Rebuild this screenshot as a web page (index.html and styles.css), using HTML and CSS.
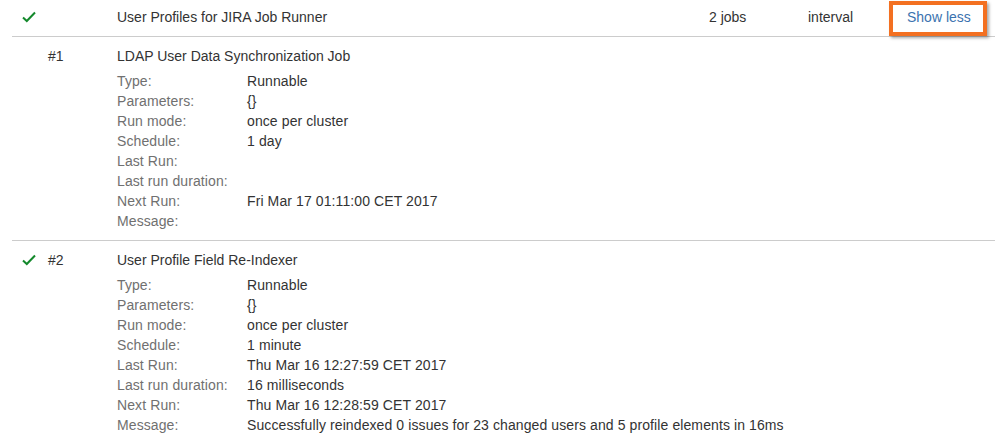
FILE: index.html
```html
<!DOCTYPE html>
<html lang="en">
<head>
    <meta charset="UTF-8">
    <title>Scheduler details</title>
    <link rel="stylesheet" href="styles.css">
</head>
<body>

    <div class="scheduler">
        <!-- Runner row -->
        <div class="runner-row">
            <div class="status">
                <svg class="check" width="14" height="12" viewBox="0 0 14 12"><path d="M1 6.5 L4.8 10 L13 1.5" fill="none" stroke="#14892c" stroke-width="2"/></svg>
            </div>
            <div class="num"></div>
            <div class="runner-name">User Profiles for JIRA Job Runner</div>
            <div class="jobs">2 jobs</div>
            <div class="type">interval</div>
            <div class="action"><a href="#" class="highlight">Show less</a></div>
        </div>

        <!-- Job #1 -->
        <div class="job">
            <div class="status"></div>
            <div class="num">#1</div>
            <div class="job-body">
                <div class="job-title">LDAP User Data Synchronization Job</div>
                <dl class="details">
                    <dt>Type:</dt><dd>Runnable</dd>
                    <dt>Parameters:</dt><dd>{}</dd>
                    <dt>Run mode:</dt><dd>once per cluster</dd>
                    <dt>Schedule:</dt><dd>1 day</dd>
                    <dt>Last Run:</dt><dd></dd>
                    <dt>Last run duration:</dt><dd></dd>
                    <dt>Next Run:</dt><dd>Fri Mar 17 01:11:00 CET 2017</dd>
                    <dt>Message:</dt><dd></dd>
                </dl>
            </div>
        </div>

        <!-- Job #2 -->
        <div class="job">
            <div class="status">
                <svg class="check" width="14" height="12" viewBox="0 0 14 12"><path d="M1 6.5 L4.8 10 L13 1.5" fill="none" stroke="#14892c" stroke-width="2"/></svg>
            </div>
            <div class="num">#2</div>
            <div class="job-body">
                <div class="job-title">User Profile Field Re-Indexer</div>
                <dl class="details">
                    <dt>Type:</dt><dd>Runnable</dd>
                    <dt>Parameters:</dt><dd>{}</dd>
                    <dt>Run mode:</dt><dd>once per cluster</dd>
                    <dt>Schedule:</dt><dd>1 minute</dd>
                    <dt>Last Run:</dt><dd>Thu Mar 16 12:27:59 CET 2017</dd>
                    <dt>Last run duration:</dt><dd>16 milliseconds</dd>
                    <dt>Next Run:</dt><dd>Thu Mar 16 12:28:59 CET 2017</dd>
                    <dt>Message:</dt><dd>Successfully reindexed 0 issues for 23 changed users and 5 profile elements in 16ms</dd>
                </dl>
            </div>
        </div>
    </div>

</body>
</html>
```

FILE: styles.css
```css
/* Reset */
* {
    margin: 0;
    padding: 0;
    box-sizing: border-box;
}

body {
    font-family: "Liberation Sans", Arial, sans-serif;
    font-size: 14px;
    line-height: 20px;
    color: #333;
    background-color: #fff;
}

/* Outer list */
.scheduler {
    margin-left: 12px;
    width: 983px;
}

.status {
    width: 36px;
    padding-left: 10px;
}

.check {
    display: block;
    margin-top: 4px;
}

.num {
    width: 69px;
}

/* Runner row */
.runner-row {
    display: flex;
    padding: 7px 0 9px;
    border-bottom: 1px solid #ccc;
}

.runner-name {
    width: 592px;
}

.jobs {
    width: 99px;
}

.type {
    width: 99px;
}

.action {
    position: relative;
}

.action a {
    color: #3b73af;
    text-decoration: none;
}

/* Orange highlight box drawn over the link */
.highlight::after {
    content: "";
    box-sizing: border-box;
    position: absolute;
    left: -18px;
    top: -6px;
    width: 98px;
    height: 35px;
    border: 4px solid #f37021;
    box-shadow: 2px 2px 3px rgba(0, 0, 0, 0.35);
}

/* Job blocks */
.job {
    display: flex;
    padding: 9px 0 9px;
    border-bottom: 1px solid #ccc;
}

.job:last-child {
    border-bottom: none;
}

.job-title {
    margin-bottom: 5px;
}

.details {
    display: grid;
    grid-template-columns: 130px auto;
    letter-spacing: 0.1px;
}

.details dt {
    color: #707070;
}

.details dd {
    min-height: 20px;
}
```
